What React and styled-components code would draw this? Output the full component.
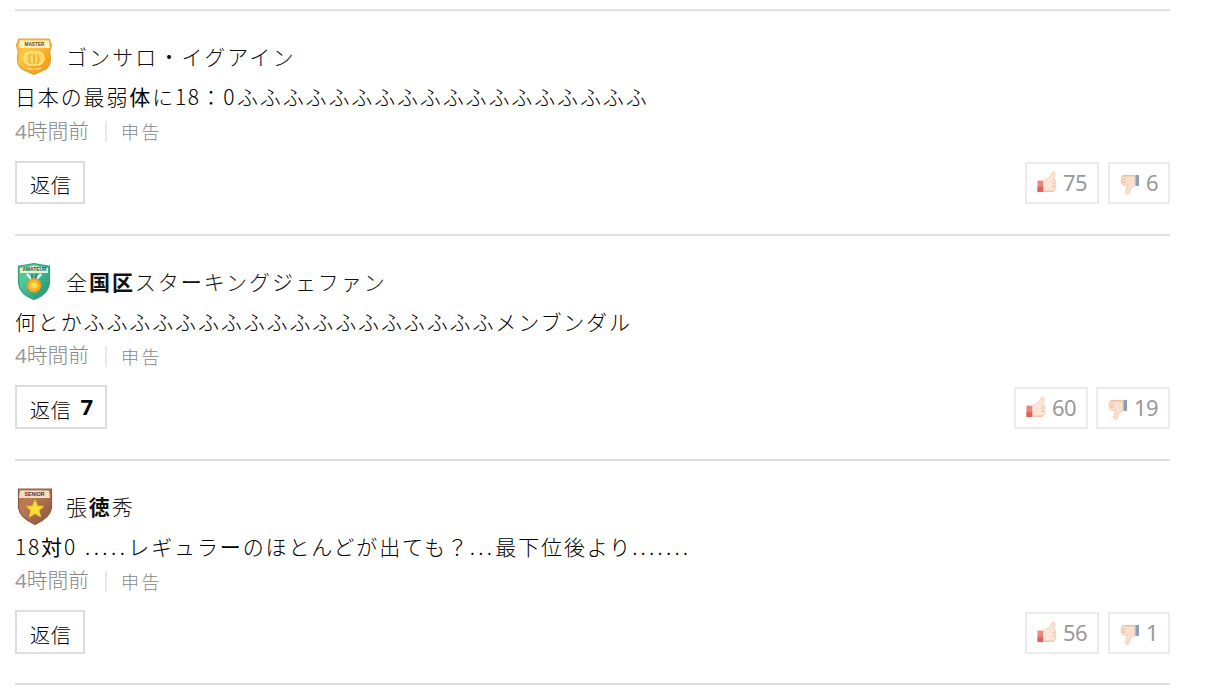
import React from "react";
import styled, { createGlobalStyle } from "styled-components";

const GlobalStyle = createGlobalStyle`
    * {
        box-sizing: border-box;
    }

    body {
        margin: 0;
        background: #fff;
        overflow: hidden;
    }
`;

const Page = styled.div`
    width: 1223px;
    height: 689px;
    padding: 9px 53px 0 15px;
    font-family: "Noto Sans CJK JP", sans-serif;
    color: #000;
    overflow: hidden;
`;

const List = styled.ul`
    list-style: none;
    margin: 0;
    padding: 0;
    border-bottom: 2px solid #e0e0e0;
`;

const Comment = styled.li`
    height: ${props => props.$height}px;
    border-top: 2px solid #e0e0e0;
    padding-top: 26px;
    display: flex;
    flex-direction: column;
`;

const Author = styled.div`
    height: 39px;
    display: flex;
    align-items: flex-start;
`;

const BadgeIcon = styled.svg`
    width: 38px;
    height: 38px;
    flex: none;
    margin-right: 13px;
`;

const Name = styled.span`
    font-size: 21px;
    font-weight: 300;
    line-height: 38px;
    letter-spacing: ${props => props.$spacing}px;
    color: #111;
    white-space: nowrap;
`;

const Strong = styled.b`
    font-weight: ${props => props.$weight || 700};
`;

const Text = styled.p`
    margin: 0;
    height: 41px;
    font-size: 21px;
    font-weight: 300;
    line-height: 40px;
    letter-spacing: 1.87px;
    white-space: nowrap;
`;

const Digits = styled.span`
    letter-spacing: ${props => props.$spacing || 1.4}px;
`;

const Meta = styled.div`
    height: 26px;
    display: flex;
    align-items: center;
    color: #999;
`;

const Time = styled.span`
    font-size: 20.7px;
    font-weight: 300;
    line-height: 26px;
    width: 90px;
    margin-top: ${props => props.$shift}px;
    color: #888;
    white-space: nowrap;
`;

const Hours = styled.span`
    font-family: "Noto Sans", sans-serif;
    font-weight: 400;
    color: #999;
`;

const Report = styled.span`
    border-left: 2px solid #e8e8e8;
    height: 21px;
    margin-top: 3px;
    padding-left: 14px;
    font-size: 18px;
    font-weight: 300;
    line-height: 20px;
    letter-spacing: 2.6px;
    color: #888;
`;

const Actions = styled.div`
    display: flex;
    align-items: flex-end;
    justify-content: space-between;
    height: 43px;
    margin-top: 18px;
`;

const ReplyButton = styled.button`
    height: ${props => props.$height}px;
    padding: 4px 11px 0 13px;
    display: flex;
    align-items: center;
    border: 2px solid #ddd;
    background: #fff;
    color: #000;
    font-family: inherit;
    font-size: 20px;
    font-weight: 300;
    letter-spacing: 0.8px;
    white-space: nowrap;
`;

const ReplyCount = styled.b`
    margin: -6px 1px 0 9px;
    font-family: "Noto Sans", sans-serif;
    font-size: 22px;
    font-weight: 700;
    letter-spacing: 0;
`;

const Votes = styled.div`
    display: flex;
    gap: ${props => props.$gap}px;
`;

const VoteButton = styled.button`
    height: 42px;
    padding: 0 10px 2px;
    display: flex;
    align-items: center;
    border: 2px solid #ebebeb;
    background: #fff;
    color: #999;
    font-family: "Noto Sans", sans-serif;
    font-size: 22px;
    letter-spacing: -0.6px;
`;

const ThumbIcon = styled.svg`
    width: 20px;
    height: 26px;
    margin: ${props => (props.$down ? "4px 6px 0 0" : "1px 6px 0 0")};
`;

const comments = [
    {
        id: 1,
        height: 225,
        buttonHeight: 43,
        gap: 9,
        timeShift: 0,
        badge: "master",
        nameSpacing: 2.1,
        name: <>ゴンサロ・イグアイン</>,
        text: <>日本の最弱<Strong $weight={400}>体</Strong>に<Digits>18</Digits>：<Digits $spacing={2.4}>0</Digits>ふふふふふふふふふふふふふふふふふふ</>,
        up: 75,
        down: 6
    },
    {
        id: 2,
        height: 225,
        buttonHeight: 44,
        gap: 8,
        timeShift: -2,
        badge: "amateur",
        nameSpacing: 1.95,
        name: <>全<Strong>国区</Strong>スタ<Strong $weight={400}>ー</Strong>キングジェファン</>,
        text: <>何とかふふふふふふふふふふふふふふふふふふメンブンダル</>,
        replies: 7,
        up: 60,
        down: 19
    },
    {
        id: 3,
        height: 224,
        buttonHeight: 44,
        gap: 9,
        timeShift: -2,
        badge: "senior",
        nameSpacing: 1.85,
        name: <>張<Strong>徳</Strong>秀</>,
        text: <><Digits $spacing={1.8}>18</Digits><Strong $weight={400}>対</Strong><Digits $spacing={2.6}>0 </Digits><Digits $spacing={3.4}>.....</Digits>レギュラ<Strong $weight={400}>ー</Strong>のほとんどが出ても？<Digits $spacing={3.3}>...</Digits>最下位後より<Digits $spacing={3.2}>.......</Digits></>,
        up: 56,
        down: 1
    }
];

const shields = {
    master: "M4 2 H34 L36.5 8 L34.5 15 Q38 29 29 33 L19 37.5 L9 33 Q0 29 3.5 15 L1.5 8 Z",
    amateur: "M3.5 4 Q10 3.5 19 1.5 Q28 3.5 34.5 4 V20 Q34 32 19 37.5 Q4 32 3.5 20 Z",
    senior: "M3.5 2 H36.5 V21 Q35 31 20 37.5 Q5 31 3.5 21 Z"
};

const badgeColors = {
    master: { edge: "#dda040", top: "#ffc43b", bottom: "#f2a31c", band: "#fff1c4", text: "#6b4510" },
    amateur: { edge: "#3b9a7c", top: "#55c59a", bottom: "#2ba37c", band: "#d9f4dc", text: "#174f3b" },
    senior: { edge: "#8a5c47", top: "#b97955", bottom: "#9c6144", band: "#f9dec6", text: "#59301f" }
};

function Badge({ type }) {
    const color = badgeColors[type];

    return (
        <BadgeIcon viewBox="0 0 38 38">
            <defs>
                <linearGradient id={`fill-${type}`} x1="0" y1="0" x2="1" y2="1">
                    <stop offset="0.35" stopColor={color.top} />
                    <stop offset="0.75" stopColor={color.bottom} />
                </linearGradient>
            </defs>
            <path d={shields[type]} fill={`url(#fill-${type})`} stroke={color.edge} strokeWidth="1.2" />
            <path
                d={type === "amateur" ? "M5 6 Q12 5.5 19 3.5 Q26 5.5 33 6 V11 H5 Z" : "M5 3.5 H34 L35 11 H4 Z"}
                fill={color.band}
            />
            <text
                x="19.5"
                y="8.6"
                fill={color.text}
                fontFamily="Liberation Sans"
                fontSize="5"
                fontWeight="700"
                textAnchor="middle"
                textLength={type === "amateur" ? 24 : 20}
                lengthAdjust="spacingAndGlyphs"
            >
                {type.toUpperCase()}
            </text>
            {type === "master" && (
                <g fill="#ffd65d" stroke="#fff0a0" strokeWidth="1.2">
                    <path d="M18 15 Q10 14 9 21 Q9 26 14 28 H24 Q29 26 29 21 Q28 14 20 15 Z" />
                    <path d="M16 17 Q12 22 16 27 M22 17 Q26 22 22 27 M19 17 V27" fill="none" stroke="#e4a52a" />
                    <path d="M12 31 Q19 34 26 31" fill="none" />
                </g>
            )}
            {type === "amateur" && (
                <g>
                    <path d="M12 12 L18 19 M26 12 L20 19" stroke="#e9fff3" strokeWidth="2.5" />
                    <path d="M17 12 V18 M21 12 V18" stroke="#2c7967" strokeWidth="1.5" />
                    <circle cx="19" cy="23.5" r="6.3" fill="#fbb92a" stroke="#f2a01c" strokeWidth="1.8" />
                    <circle cx="19" cy="23.5" r="2.8" fill="#ffdf68" />
                </g>
            )}
            {type === "senior" && (
                <path
                    d="M20 13 L22.5 19 L28.5 19.4 L24 23.6 L25.7 30 L20 26.6 L14.3 30 L16 23.6 L11.5 19.4 L17.5 19 Z"
                    fill="#fadd3b"
                    stroke="#f0c52c"
                    strokeWidth="1"
                />
            )}
        </BadgeIcon>
    );
}

function Thumb({ down }) {
    return (
        <ThumbIcon $down={down} viewBox="0 0 21 26">
            {down ? (
                <g>
                    <path
                        d="M16 4 H7 Q3 3.5 2 5 Q0 6 2 8 Q0 9 2 11 Q0 12 3 14 Q5 15 8 14 L6 20 Q5 23 8 24 L9.5 23 L11 18 L16 14 Z"
                        fill="#fbdfcd"
                        stroke="#f2cbb3"
                    />
                    <path d="M2 8 H6 M2 11 H6 M3 4.5 H15" stroke="#e9b493" fill="none" />
                    <path d="M16 3.5 H20 V15 H16 Z" fill="#8b9eb5" />
                    <path d="M16 3.5 V15" stroke="#c4c5cd" />
                </g>
            ) : (
                <g>
                    <path
                        d="M6 11 L10 9 L14 6 L16 2 Q19 1 19 4 L17 9 H18 Q21 10 19 12 Q21 14 19 16 Q21 18 19 20 Q18 22 15 22 H6 Z"
                        fill="#fbe5d7"
                        stroke="#f2cbb3"
                    />
                    <path d="M16 13 H19 M16 16.5 H19 M8 21.5 H18" stroke="#ecbc9f" fill="none" />
                    <path d="M0.5 10.5 H6.5 V22.5 H0.5 Z" fill="#e68a80" />
                    <path d="M0.5 17 H6.5 V22.5 H0.5 Z" fill="#dc645c" />
                </g>
            )}
        </ThumbIcon>
    );
}

function App() {
    return (
        <Page>
            <GlobalStyle />
            <List>
                {comments.map(comment => (
                    <Comment key={comment.id} $height={comment.height}>
                        <Author>
                            <Badge type={comment.badge} />
                            <Name $spacing={comment.nameSpacing}>{comment.name}</Name>
                        </Author>
                        <Text>{comment.text}</Text>
                        <Meta>
                            <Time $shift={comment.timeShift}><Hours>4</Hours>時間前</Time>
                            <Report>申告</Report>
                        </Meta>
                        <Actions>
                            <ReplyButton $height={comment.buttonHeight}>
                                返信
                                {comment.replies && <ReplyCount>{comment.replies}</ReplyCount>}
                            </ReplyButton>
                            <Votes $gap={comment.gap}>
                                <VoteButton>
                                    <Thumb />
                                    {comment.up}
                                </VoteButton>
                                <VoteButton>
                                    <Thumb down />
                                    {comment.down}
                                </VoteButton>
                            </Votes>
                        </Actions>
                    </Comment>
                ))}
            </List>
        </Page>
    );
}

export default App;
